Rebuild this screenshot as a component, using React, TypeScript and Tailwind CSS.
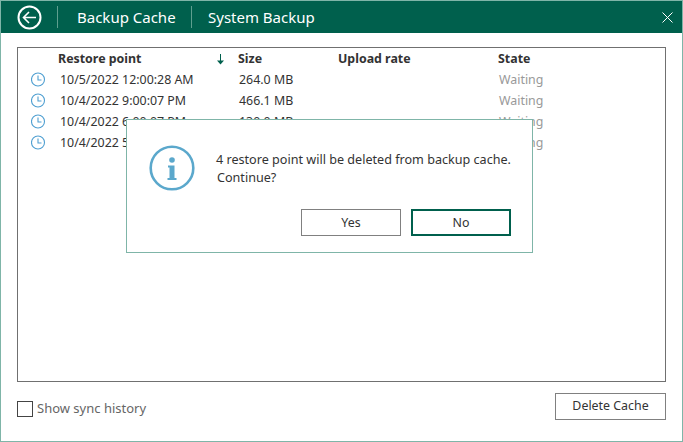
import React from "react";

const rows = [
  ["10/5/2022 12:00:28 AM", "264.0 MB", "Waiting"],
  ["10/4/2022 9:00:07 PM", "466.1 MB", "Waiting"],
  ["10/4/2022 6:00:07 PM", "130.0 MB", "Waiting"],
  ["10/4/2022 5:00:07 PM", "120.0 MB", "Waiting"],
];

function Clock() {
  return (
    <svg width="15" height="15" viewBox="0 0 15 15" fill="none" stroke="#4f9fd1" strokeWidth="1.1">
      <circle cx="7" cy="7.5" r="6.5" />
      <path d="M7 3.5V8H10.5" />
    </svg>
  );
}

export default function App() {
  return (
    <div className="relative w-[683px] h-[442px] bg-white border-x border-b border-[#7fb5a8] flex flex-col overflow-hidden font-['Noto_Sans','Open_Sans',sans-serif] text-[12.4px] text-[#333]">
      <div className="h-[33px] -mx-px bg-[#00604d] border-t border-[#7fb5a8] flex items-center text-white shrink-0">
        <div className="ml-[17px] w-[25px] h-[25px] flex items-center justify-center">
          <svg width="25" height="25" viewBox="0 0 25 25" fill="none" stroke="white">
            <circle cx="12.5" cy="12.5" r="11" strokeWidth="2" />
            <path d="M19 12.5H6.5M12 7l-5.5 5.5L12 18" strokeWidth="1.6" />
          </svg>
        </div>
        <div className="ml-[15px] w-px h-[22px] bg-[#5f9f8f]" />
        <div className="ml-[19px] w-[114px] text-[15px] leading-none">Backup Cache</div>
        <div className="w-px h-[22px] bg-[#5f9f8f]" />
        <div className="ml-[16px] text-[15px] leading-none">System Backup</div>
        <svg className="ml-auto mr-[10px]" width="11" height="11" viewBox="0 0 11 11" stroke="white" strokeWidth="1">
          <path d="M0.5 0.5L10.5 10.5M10.5 0.5L0.5 10.5" />
        </svg>
      </div>

      <div className="mt-[14px] ml-4 w-[649px] h-[335px] border border-[#707070] shrink-0 pt-[1px]">
        <div className="flex h-[20px] items-center font-bold">
          <div className="ml-10 w-[158px]">Restore point</div>
          <div className="w-[22px] flex items-center">
            <svg width="9" height="11" viewBox="0 0 9 11" fill="none" stroke="#00604d">
              <path d="M4.5 0V9" />
              <path d="M1 6.5h7L4.5 10.5z" fill="#00604d" stroke="none" />
            </svg>
          </div>
          <div className="w-[100px]">Size</div>
          <div className="w-[160px]">Upload rate</div>
          <div>State</div>
        </div>
        {rows.map((r) => (
          <div key={r[0]} className="flex h-[21px] items-center">
            <div className="ml-[13px] w-[29px] flex"><Clock /></div>
            <div className="w-[179px] pt-[2px]">{r[0]}</div>
            <div className="w-[260px] pt-[2px]">{r[1]}</div>
            <div className="text-[#999] pt-[2px]">{r[2]}</div>
          </div>
        ))}
      </div>

      <div className="flex items-start justify-between ml-4 mr-4 mt-[11px]">
        <div className="flex items-center mt-[6px]">
          <div className="w-4 h-4 border border-[#444]" />
          <span className="ml-1 text-[13px] text-[#666]">Show sync history</span>
        </div>
        <button className="w-[111px] h-[27px] border border-[#808080] bg-white text-[#333]">Delete Cache</button>
      </div>

      <div className="absolute left-[125px] top-[119px] w-[407px] h-[134px] bg-white border border-[#7fb5a8]">
        <div className="flex">
          <svg className="ml-[22px] mt-[25px]" width="46" height="46" viewBox="0 0 46 46" fill="none">
            <circle cx="23" cy="23" r="21.3" stroke="#5ba8cc" strokeWidth="2.6" />
            <circle cx="23" cy="15" r="2.8" fill="#5ba8cc" />
            <path d="M19 20.5h6.5V33h2v2H18.5v-2h2V22.5h-1.5z" fill="#5ba8cc" />
          </svg>
          <div className="ml-[21px] mt-[31px] leading-[18px] text-[12.6px]">
            <div>4 restore point will be deleted from backup cache.</div>
            <div className="ml-px">Continue?</div>
          </div>
        </div>
        <div className="absolute left-[174px] top-[89px] flex gap-[10px]">
          <button className="w-[100px] h-[27px] border border-[#808080] bg-white pt-[2px]">Yes</button>
          <button className="w-[100px] h-[27px] border-2 border-[#00604d] bg-white pt-[2px]">No</button>
        </div>
      </div>
    </div>
  );
}
